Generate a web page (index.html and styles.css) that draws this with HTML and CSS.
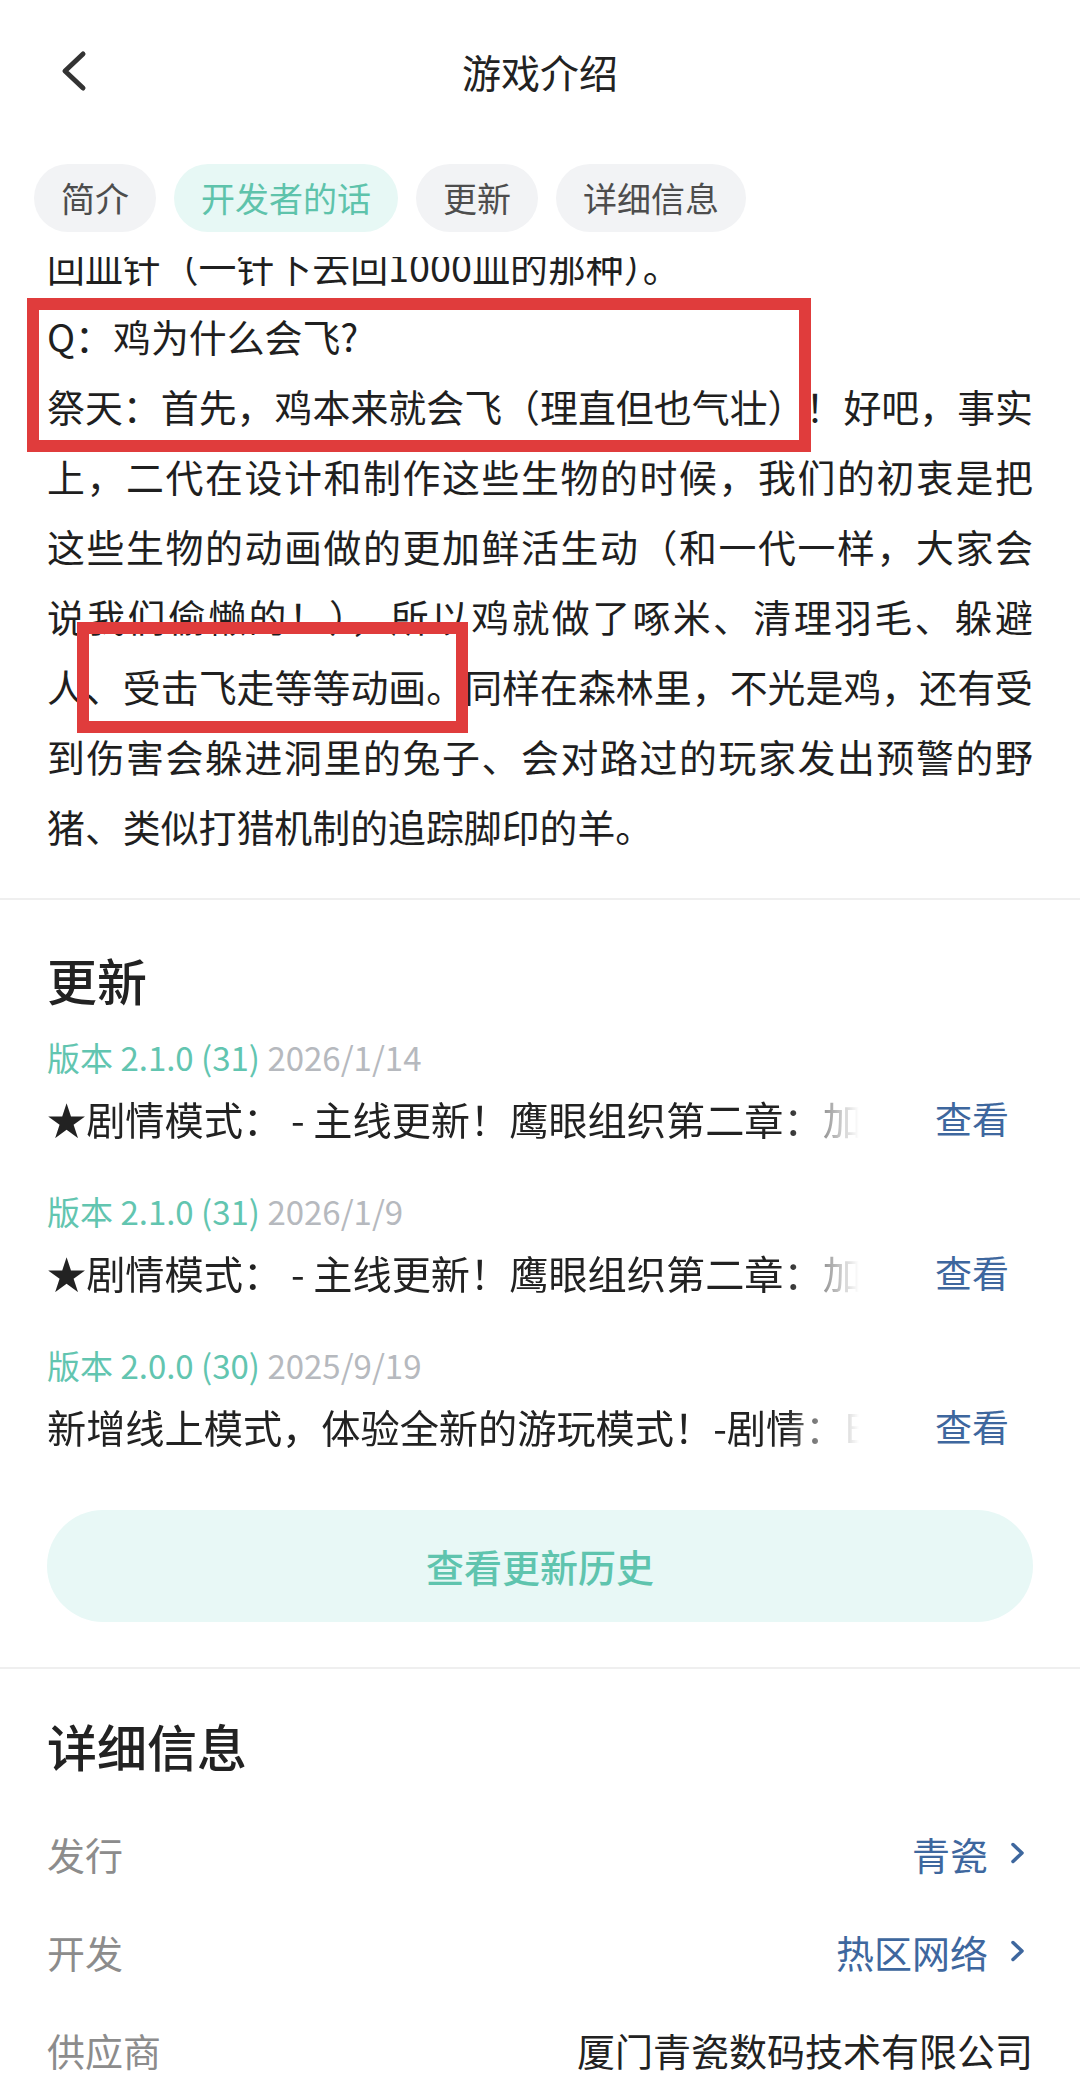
FILE: index.html
```html
<!DOCTYPE html>
<html lang="zh-CN">
  <head>
    <meta charset="utf-8">
    <meta name="viewport" content="width=device-width, initial-scale=1">
    <title>游戏介绍</title>
    <link rel="stylesheet" href="styles.css">
  </head>
  <body>
    <div class="page">

      <!-- fixed top: nav bar + tabs -->
      <div class="top">
        <div class="nav">
          <a class="back" href="#">
            <svg width="34" height="50" viewBox="0 0 34 50"><path d="M27 8 L9 25 L27 42" fill="none" stroke="#333" stroke-width="5" stroke-linecap="round" stroke-linejoin="round"/></svg>
          </a>
          <h1 class="title">游戏介绍</h1>
          <span></span>
        </div>
        <div class="tabs">
          <span class="tab">简介</span>
          <span class="tab on">开发者的话</span>
          <span class="tab">更新</span>
          <span class="tab">详细信息</span>
        </div>
      </div>

      <!-- developer's words, scrolled under the tabs -->
      <div class="scroll">
        <div class="article">
          <p class="para">回皿针（一针下去回1000皿的那种）。</p>
          <p class="para">Q：鸡为什么会飞?</p>
          <p class="para">
            <span class="ln">祭天：首先，鸡本来就会飞（理直但也气壮）！好吧，事实</span>
            <span class="ln">上，二代在设计和制作这些生物的时候，我们的初衷是把</span>
            <span class="ln">这些生物的动画做的更加鲜活生动（和一代一样，大家会</span>
            <span class="ln">说我们偷懒的！），所以鸡就做了啄米、清理羽毛、躲避</span>
            <span class="ln">人、受击飞走等等动画。同样在森林里，不光是鸡，还有受</span>
            <span class="ln">到伤害会躲进洞里的兔子、会对路过的玩家发出预警的野</span>
            <span class="ln end">猪、类似打猎机制的追踪脚印的羊。</span>
          </p>
          <div class="mark mark-q"></div>
          <div class="mark mark-anim"></div>
        </div>
      </div>

      <section class="sec updates">
        <h2 class="sec-title">更新</h2>

        <div class="upd">
          <div class="ver"><span class="vno">版本 2.1.0 (31)</span> <span class="vdate">2026/1/14</span></div>
          <div class="upd-row">
            <span class="upd-text">★剧情模式： - 主线更新！鹰眼组织第二章：加</span>
            <a class="view" href="#">查看</a>
          </div>
        </div>

        <div class="upd">
          <div class="ver"><span class="vno">版本 2.1.0 (31)</span> <span class="vdate">2026/1/9</span></div>
          <div class="upd-row">
            <span class="upd-text">★剧情模式： - 主线更新！鹰眼组织第二章：加</span>
            <a class="view" href="#">查看</a>
          </div>
        </div>

        <div class="upd">
          <div class="ver"><span class="vno">版本 2.0.0 (30)</span> <span class="vdate">2025/9/19</span></div>
          <div class="upd-row">
            <span class="upd-text">新增线上模式，体验全新的游玩模式！-剧情：B</span>
            <a class="view" href="#">查看</a>
          </div>
        </div>

        <a class="history" href="#">查看更新历史</a>
      </section>

      <section class="sec details">
        <h2 class="sec-title">详细信息</h2>
        <div class="row">
          <span class="lbl">发行</span>
          <a class="val link" href="#">青瓷<svg class="chev" width="16" height="24" viewBox="0 0 16 24"><path d="M3 3.5 L12 12 L3 20.5"/></svg></a>
        </div>
        <div class="row">
          <span class="lbl">开发</span>
          <a class="val link" href="#">热区网络<svg class="chev" width="16" height="24" viewBox="0 0 16 24"><path d="M3 3.5 L12 12 L3 20.5"/></svg></a>
        </div>
        <div class="row">
          <span class="lbl">供应商</span>
          <span class="val">厦门青瓷数码技术有限公司</span>
        </div>
      </section>

    </div>
  </body>
</html>
```

FILE: styles.css
```css
body {
    margin: 0;
    background: #fff;
    color: #222;
    font-family: "Noto Sans CJK SC", "Noto Sans", sans-serif;
}

a { color: inherit; text-decoration: none; }

.page {
    width: 1080px;
    overflow: hidden;
}

/* ---- top bar ---- */
.top {
    padding-bottom: 25px;
    background: #fff;
}

.nav {
    height: 142px;
    display: grid;
    grid-template-columns: 1fr auto 1fr;
    align-items: center;
}

.back {
    display: flex;
    padding-left: 56px;
}

.title {
    margin: 0;
    font-size: 39px;
    font-weight: 400;
    line-height: 50px;
    color: #222;
}

.tabs {
    display: flex;
    gap: 18px;
    margin-top: 22px;
    padding: 0 34px;
}

.tab {
    height: 68px;
    line-height: 68px;
    padding: 0 27px;
    border-radius: 34px;
    background: #f2f3f5;
    color: #4d4d4d;
    font-size: 34px;
}

.tab.on {
    background: #e7f8f5;
    color: #5ec3ab;
}

/* ---- article ---- */
.scroll {
    overflow: hidden;
}

.article {
    position: relative;
    margin-top: -26px;
    padding: 0 47px 37px;
    font-size: 37.9px;
    line-height: 70px;
    color: #1f1f1f;
}

.para { margin: 0; }

.ln {
    display: block;
    text-align: justify;
    text-align-last: justify;
}

.ln.end { text-align-last: left; }

/* red annotation boxes */
.mark {
    position: absolute;
    box-sizing: border-box;
    border: 12px solid #e03c3c;
}

.mark-q    { top: 67px;  left: 27px; width: 784px; height: 154px; }
.mark-anim { top: 391px; left: 77px; width: 391px; height: 111px; }

/* ---- sections ---- */
.sec {
    border-top: 2px solid #efefef;
    padding: 0 47px;
}

.sec-title {
    margin: 0;
    font-size: 50px;
    font-weight: 500;
    line-height: 70px;
    color: #222;
}

.updates {
    padding-top: 44px;
    padding-bottom: 45px;
}

.upd { margin-top: 18px; }
.upd + .upd { margin-top: 40px; }

.ver {
    font-size: 33px;
    line-height: 50px;
}

.vno { color: #62c5b0; }
.vdate { color: #b6b9be; }

.upd-row {
    display: flex;
    margin-top: 8px;
    font-size: 39.2px;
    line-height: 56px;
}

.upd-text {
    flex: 1;
    min-width: 0;
    white-space: nowrap;
    overflow: hidden;
    -webkit-mask-image: linear-gradient(90deg, #000 calc(100% - 80px), transparent calc(100% - 6px));
    mask-image: linear-gradient(90deg, #000 calc(100% - 80px), transparent calc(100% - 6px));
}

.view {
    margin: 0 24px 0 70px;
    font-size: 37px;
    color: #3e679e;
}

.history {
    display: block;
    margin-top: 56px;
    height: 112px;
    line-height: 112px;
    border-radius: 56px;
    background: #e8f8f6;
    color: #5fc4ae;
    font-size: 38px;
    font-weight: 500;
    text-align: center;
}

.details {
    padding-top: 41px;
}

.details .sec-title { margin-bottom: 24px; }

.row {
    display: flex;
    justify-content: space-between;
    align-items: center;
    height: 98px;
    font-size: 38px;
}

.lbl { color: #8c8c8c; }

.val {
    display: flex;
    align-items: center;
    color: #222;
}

.val.link { color: #3e679e; }

.chev {
    margin: 0 7px 0 22px;
}

.chev path {
    fill: none;
    stroke: currentColor;
    stroke-width: 3.5;
    stroke-linecap: round;
    stroke-linejoin: round;
}
```
